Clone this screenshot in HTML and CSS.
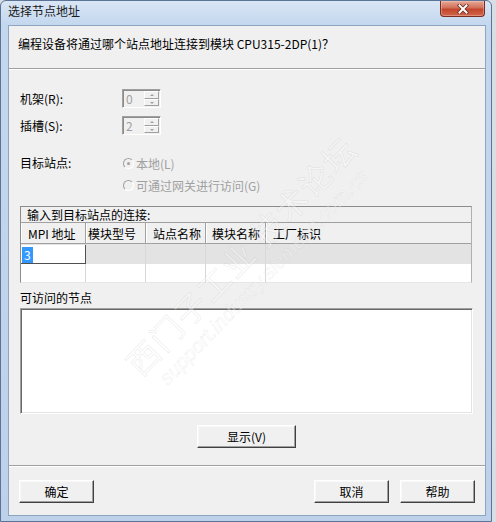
FILE: index.html
```html
<!DOCTYPE html>
<html lang="zh-CN">
<head>
<meta charset="utf-8">
<title>选择节点地址</title>
<link rel="stylesheet" href="styles.css">
</head>
<body>
<div class="window">
  <div class="titlebar">
    <span class="title">选择节点地址</span>
    <div class="close">
      <svg width="12" height="10" viewBox="0 0 12 10"><path d="M2.5 1.5 L9.5 8.5 M9.5 1.5 L2.5 8.5" stroke="#6b2a20" stroke-width="3.6" stroke-linecap="square" fill="none"/><path d="M2.5 1.5 L9.5 8.5 M9.5 1.5 L2.5 8.5" stroke="#ffffff" stroke-width="2" stroke-linecap="square" fill="none"/></svg>
    </div>
  </div>
  <div class="client">
    <div class="header">编程设备将通过哪个站点地址连接到模块 CPU315-2DP(1)？</div>
    <div class="main">
      <div class="field first">
        <span class="lbl">机架(R):</span>
        <div class="spin"><span class="val">0</span><span class="spinbtns"><span class="sb up"></span><span class="sb down"></span></span></div>
      </div>
      <div class="field second">
        <span class="lbl">插槽(S):</span>
        <div class="spin"><span class="val">2</span><span class="spinbtns"><span class="sb up"></span><span class="sb down"></span></span></div>
      </div>
      <div class="dest">
        <span class="lbl">目标站点:</span>
        <div class="radios">
          <div class="radio"><span class="rb checked"></span>本地(L)</div>
          <div class="radio"><span class="rb"></span>可通过网关进行访问(G)</div>
        </div>
      </div>
      <div class="conn">
        <div class="conn-title">输入到目标站点的连接:</div>
        <div class="cols">
          <span class="col c1">MPI 地址</span>
          <span class="col c2">模块型号</span>
          <span class="col c3">站点名称</span>
          <span class="col c4">模块名称</span>
          <span class="col c5">工厂标识</span>
        </div>
        <div class="row sel">
          <span class="cell c1"><span class="edit"><span class="hl">3</span></span></span>
          <span class="cell"></span>
          <span class="cell"></span>
          <span class="cell"></span>
          <span class="cell last"></span>
        </div>
        <div class="row">
          <span class="cell"></span>
          <span class="cell"></span>
          <span class="cell"></span>
          <span class="cell"></span>
          <span class="cell last"></span>
        </div>
      </div>
      <div class="lbl2">可访问的节点</div>
      <div class="list"></div>
      <button class="btn show">显示(V)</button>
    </div>
    <div class="sep"></div>
    <div class="footer">
      <button class="btn ok">确定</button>
      <button class="btn cancel">取消</button>
      <button class="btn help">帮助</button>
    </div>
    <div class="watermark">
      <div class="wm-big">西门子工业 技术论坛</div>
      <div class="wm-small">support.industry.siemens.com.cs</div>
    </div>
  </div>
</div>
</body>
</html>
```
FILE: styles.css
```css
html, body {
  margin: 0;
  padding: 0;
}
body {
  width: 496px;
  height: 522px;
  overflow: hidden;
  background: #d9dee5;
  font-family: "Noto Sans CJK SC", "Noto Sans", sans-serif;
  font-size: 12px;
  color: #000;
}
.window {
  box-sizing: border-box;
  width: 492px;
  height: 522px;
  border: 1px solid #5b7496;
  border-radius: 6px 6px 0 0;
  background: linear-gradient(#d9e6f5, #c3d7ee 24px, #bdd2ea);
  padding: 0 5px 5px 7px;
  display: flex;
  flex-direction: column;
}
.titlebar {
  height: 24px;
  display: flex;
  align-items: flex-start;
}
.title {
  line-height: 20px;
  color: #1a1a1a;
}
.close {
  margin-left: auto;
  margin-right: 1px;
  width: 45px;
  height: 16px;
  box-sizing: border-box;
  border: 1px solid #7a2c20;
  border-top: none;
  border-radius: 0 0 4px 4px;
  background: linear-gradient(#e6a897, #d2705a 45%, #c2452c 55%, #d0664b);
  display: flex;
  align-items: center;
  justify-content: center;
  box-shadow: inset 0 0 0 1px rgba(255, 220, 210, 0.35);
}
.client {
  flex: 1;
  background: #f0f0f0;
  border: 1px solid #8ea5c2;
  display: flex;
  flex-direction: column;
  position: relative;
  overflow: hidden;
}
.header {
  height: 43px;
  box-sizing: border-box;
  padding: 10px 9px 0;
  line-height: 16px;
  border-bottom: 1px solid #a0a0a0;
}
.main {
  border-top: 1px solid #fff;
  padding: 0 12px 0 11px;
  display: flex;
  flex-direction: column;
}
.field {
  display: flex;
  align-items: center;
  height: 19px;
}
.field.first {
  margin-top: 19px;
}
.field.second {
  margin-top: 8px;
}
.lbl {
  width: 102px;
  flex: none;
  line-height: 16px;
}
.spin {
  width: 39px;
  height: 19px;
  box-sizing: border-box;
  border: 1px solid;
  border-color: #a0a0a0 #ffffff #ffffff #a0a0a0;
  box-shadow: inset 1px 1px 0 #8a8a8a;
  background: #f0f0f0;
  display: flex;
  align-items: center;
}
.val {
  flex: 1;
  padding-left: 3px;
  color: #a0a0a0;
  line-height: 16px;
}
.spinbtns {
  width: 15px;
  height: 15px;
  margin-right: 1px;
  display: flex;
  flex-direction: column;
}
.sb {
  flex: 1;
  box-sizing: border-box;
  border: 1px solid;
  border-color: #ffffff #a0a0a0 #a0a0a0 #ffffff;
  background: #f0f0f0;
  position: relative;
}
.sb::after {
  content: "";
  position: absolute;
  left: 5px;
  width: 0;
  height: 0;
  border-left: 2px solid transparent;
  border-right: 2px solid transparent;
}
.sb.up::after {
  top: 2px;
  border-bottom: 2px solid #a0a0a0;
}
.sb.down::after {
  top: 2px;
  border-top: 2px solid #a0a0a0;
}
.dest {
  margin-top: 20px;
  display: flex;
  align-items: flex-start;
}
.dest .lbl {
  width: 103px;
  line-height: 16px;
}
.radios {
  display: flex;
  flex-direction: column;
  gap: 6px;
}
.radio {
  display: flex;
  align-items: center;
  height: 16px;
  color: #a0a0a0;
}
.rb {
  width: 11px;
  height: 11px;
  box-sizing: border-box;
  border-radius: 50%;
  border: 1px solid;
  border-color: #a0a0a0 #ffffff #ffffff #a0a0a0;
  background: #f0f0f0;
  margin-right: 2px;
  position: relative;
}
.rb.checked::after {
  content: "";
  position: absolute;
  left: 3px;
  top: 3px;
  width: 3px;
  height: 3px;
  border-radius: 50%;
  background: #a0a0a0;
}
.conn {
  margin-top: 13px;
  margin-right: 1px;
  height: 77px;
  box-sizing: border-box;
  border: 1px solid;
  border-color: #8c8c8c #b0b0b0 #e6e6e6 #8c8c8c;
  display: flex;
  flex-direction: column;
}
.conn-title {
  height: 15px;
  line-height: 15px;
  padding-left: 6px;
  border-bottom: 1px solid #a0a0a0;
}
.cols {
  display: grid;
  grid-template-columns: 65px 60px 60px 60px 1fr;
  height: 21px;
  box-sizing: border-box;
  border-bottom: 1px solid #a0a0a0;
}
.col {
  box-sizing: border-box;
  height: 20px;
  line-height: 18px;
  padding-top: 2px;
  border-right: 1px solid #a0a0a0;
  border-left: 1px solid #ffffff;
  white-space: nowrap;
}
.col.c1 { padding-left: 6px; }
.col.c2 { padding-left: 1px; }
.col.c3 { padding-left: 6px; }
.col.c4 { padding-left: 5px; }
.col.c5 { padding-left: 6px; border-right: none; }
.row {
  display: grid;
  grid-template-columns: 65px 60px 60px 60px 1fr;
  height: 18px;
  background: #fff;
}
.row.sel {
  height: 20px;
  background: #e3e3e3;
}
.cell {
  border-right: 1px solid #d8d8d8;
}
.cell.last {
  border-right: none;
}
.cell.c1 {
  padding-top: 1px;
}
.edit {
  display: block;
  box-sizing: border-box;
  height: 19px;
  width: 65px;
  background: #fff;
  border-right: 1px solid #505050;
  border-bottom: 1px solid #505050;
  padding: 1px 0 0 1px;
}
.hl {
  display: inline-block;
  background: #3399ff;
  color: #fff;
  line-height: 16px;
  height: 16px;
  padding: 0 2px;
}
.lbl2 {
  margin-top: 7px;
  line-height: 16px;
}
.list {
  margin-top: 2px;
  height: 106px;
  box-sizing: border-box;
  background: #fff;
  border: 1px solid;
  border-color: #a0a0a0 #ffffff #ffffff #a0a0a0;
  box-shadow: inset 1px 1px 0 #696969, inset -1px -1px 0 #e3e3e3;
}
.btn {
  height: 23px;
  box-sizing: border-box;
  background: #f0f0f0;
  border: 1px solid;
  border-color: #ffffff #404040 #404040 #ffffff;
  box-shadow: inset -1px -1px 0 #a0a0a0, inset 1px 1px 0 #f8f8f8;
  font-family: "Noto Sans CJK SC", "Noto Sans", sans-serif;
  font-size: 12px;
  color: #000;
  padding: 0;
  line-height: 19px;
}
.show {
  margin-top: 11px;
  width: 99px;
  align-self: center;
}
.sep {
  margin-top: 17px;
  border-top: 1px solid #a0a0a0;
  border-bottom: 1px solid #ffffff;
}
.footer {
  margin-top: 13px;
  padding: 0 10px;
  display: flex;
}
.ok, .cancel, .help {
  width: 75px;
}
.cancel {
  margin-left: auto;
}
.help {
  margin-left: 11px;
}
.watermark {
  position: absolute;
  left: 50px;
  top: 205px;
  width: 380px;
  transform: rotate(-46deg);
  transform-origin: center;
  pointer-events: none;
  text-align: center;
}
.wm-big {
  font-size: 32px;
  letter-spacing: 2px;
  color: rgba(255, 255, 255, 0.35);
  -webkit-text-stroke: 0.7px rgba(150, 150, 150, 0.18);
  line-height: 40px;
}
.wm-small {
  font-family: "Liberation Sans", sans-serif;
  font-size: 20px;
  font-style: italic;
  color: rgba(255, 255, 255, 0.35);
  -webkit-text-stroke: 0.6px rgba(150, 150, 150, 0.16);
  line-height: 24px;
}
```
